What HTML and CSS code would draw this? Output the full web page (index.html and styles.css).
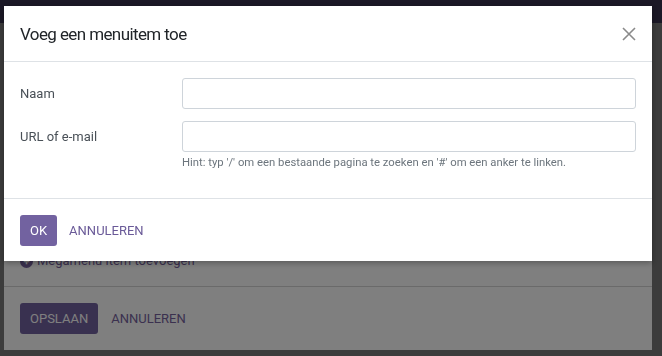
FILE: index.html
```html
<!DOCTYPE html>
<html lang="nl">
<head>
    <meta charset="UTF-8">
    <meta name="viewport" content="width=device-width, initial-scale=1.0">
    <title>Menu bewerken</title>
    <link rel="stylesheet" href="styles.css">
</head>
<body>
    <div class="navbar"></div>

    <div class="page">
        <div class="card">
            <div class="card-body">
                <a class="add-link" href="#">
                    <span class="plus-icon">+</span>
                    Megamenu item toevoegen
                </a>
            </div>
            <div class="card-footer">
                <button type="button" class="btn btn-primary">Opslaan</button>
                <button type="button" class="btn btn-link">Annuleren</button>
            </div>
        </div>
    </div>

    <!-- Modal -->
    <div class="backdrop"></div>
    <div class="modal">
        <div class="modal-header">
            <h5 class="modal-title">Voeg een menuitem toe</h5>
            <button type="button" class="close" aria-label="Sluiten">
                <svg width="14" height="14" viewBox="0 0 14 14">
                    <path d="M1 1 L13 13 M13 1 L1 13" stroke="#8a8a8a" stroke-width="1.6" fill="none"/>
                </svg>
            </button>
        </div>
        <form class="modal-body">
            <div class="form-row">
                <label for="naam">Naam</label>
                <input type="text" id="naam" name="naam">
            </div>
            <div class="form-row">
                <label for="url">URL of e-mail</label>
                <div>
                    <input type="text" id="url" name="url">
                    <small class="hint">Hint: typ '/' om een bestaande pagina te zoeken en '#' om een anker te linken.</small>
                </div>
            </div>
        </form>
        <div class="modal-footer">
            <button type="button" class="btn btn-primary">OK</button>
            <button type="button" class="btn btn-link">Annuleren</button>
        </div>
    </div>
</body>
</html>
```

FILE: styles.css
```css
* { box-sizing: border-box; }
body { margin: 0; background: #787878; font-family: Roboto, "Liberation Sans", sans-serif; color: #212529; height: 356px; overflow: hidden; }

.navbar { height: 23px; background: #36304c; }
.page { padding: 0 10px 0 4px; }
.card { background: #fff; height: 327px; display: flex; flex-direction: column; justify-content: flex-end; }
.card-body { padding: 0 16px 16px; }
.add-link { display: flex; align-items: center; gap: 4px; color: #76629e; text-decoration: none; font-size: 13px; line-height: 18px; }
.plus-icon { width: 13px; height: 13px; border-radius: 50%; background: #76629e; color: #fff; font-size: 11px; line-height: 13px; text-align: center; font-weight: 700; }
.card-footer { border-top: 1px solid #d5d5d5; padding: 16px 16px 16px; display: flex; align-items: center; gap: 5px; }

.btn { font-family: inherit; font-size: 13px; text-transform: uppercase; border: 0; border-radius: 3px; height: 31px; padding: 0 10px; cursor: pointer; background: none; }
.btn-primary { background: #7262a0; color: #fff; }
.btn-link { color: #6a5a98; padding: 0 8px; }
.card .btn-link { color: #76629e; }

.backdrop { position: fixed; inset: 0; background: rgba(0, 0, 0, 0.5); }
.modal { position: fixed; top: 6px; left: 4px; width: 648px; background: #fff; box-shadow: 0 2px 6px rgba(0, 0, 0, 0.3); }

.modal-header { display: flex; align-items: center; justify-content: space-between; padding: 16px 16px 15px; border-bottom: 1px solid #dee2e6; }
.modal-title { margin: 0; font-size: 17px; font-weight: 400; line-height: 24px; letter-spacing: -0.6px; color: #212529; }
.close { border: 0; background: none; padding: 0; width: 14px; height: 14px; cursor: pointer; display: flex; }

.modal-body { padding: 16px 16px 16px; }
.form-row { display: grid; grid-template-columns: 162px 1fr; margin-bottom: 12px; }
.form-row label { font-size: 13px; color: #495057; line-height: 31px; }
.form-row input { display: block; width: 100%; height: 31px; border: 1px solid #ced4da; border-radius: 3px; padding: 4px 8px; font: inherit; font-size: 13px; }
.hint { display: block; margin-top: 4px; font-size: 11.3px; line-height: 14px; color: #6c757d; }

.modal-footer { border-top: 1px solid #dee2e6; padding: 16px 16px 15px; display: flex; align-items: center; gap: 4px; }
```
